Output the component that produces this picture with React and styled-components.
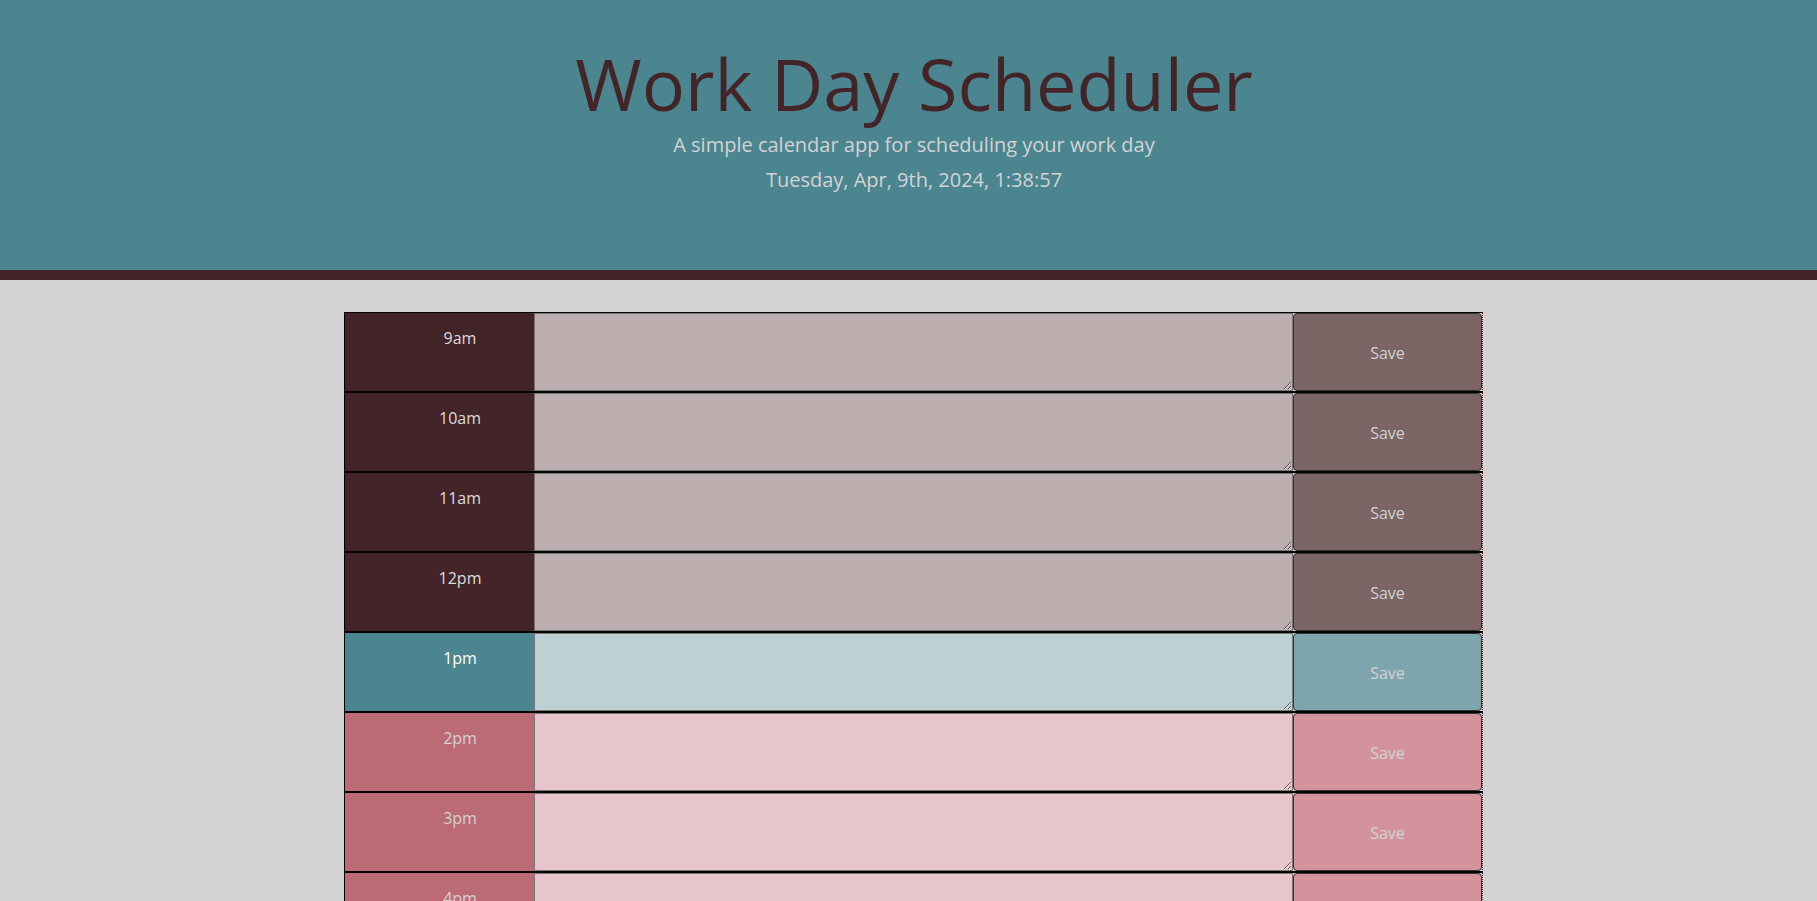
import React from "react";
import styled, { createGlobalStyle } from "styled-components";

const hours = [
  { label: "9am", time: "past" },
  { label: "10am", time: "past" },
  { label: "11am", time: "past" },
  { label: "12pm", time: "past" },
  { label: "1pm", time: "present" },
  { label: "2pm", time: "future" },
  { label: "3pm", time: "future" },
  { label: "4pm", time: "future" },
  { label: "5pm", time: "future" },
];

const palette = {
  past: { hour: "#432428", text: "#bcaeae", save: "#7a6464", label: "#dcdcdc" },
  present: { hour: "#4a8590", text: "#bdd0d4", save: "#7ea5ae", label: "#ffffff" },
  future: { hour: "#bd6a77", text: "#e7c6cb", save: "#d2939d", label: "#d3d3d3" },
};

const App = () => {
  return (
    <>
      <GlobalStyle />
      <Header>
        <Title>Work Day Scheduler</Title>
        <Lead>A simple calendar app for scheduling your work day</Lead>
        <CurrentDay>Tuesday, Apr, 9th, 2024, 1:38:57</CurrentDay>
      </Header>
      <Main>
        <Schedule>
          {hours.map((h) => (
            <TimeBlock key={h.label}>
              <Hour $time={h.time}>{h.label}</Hour>
              <Description $time={h.time} />
              <SaveBtn $time={h.time}>Save</SaveBtn>
            </TimeBlock>
          ))}
        </Schedule>
      </Main>
    </>
  );
};

export default App;

const GlobalStyle = createGlobalStyle`
  body {
    margin: 0;
    background: #d3d3d3;
    font-family: "Open Sans", "Noto Sans", sans-serif;
  }
`;

const Header = styled.header`
  box-sizing: border-box;
  height: 280px;
  padding: 40px 0 0 11px;
  background: #4a8590;
  border-bottom: 10px solid #432428;
  text-align: center;
`;

const Title = styled.h1`
  margin: 0;
  font-size: 72px;
  font-weight: 400;
  line-height: 1.2;
  color: #432428;
`;

const Lead = styled.p`
  margin: 4px 0 0;
  font-size: 20px;
  font-weight: 400;
  line-height: 30px;
  color: #d3d3d3;
`;

const CurrentDay = styled.p`
  margin: 5px 0 0;
  font-size: 20px;
  font-weight: 400;
  line-height: 30px;
  color: #d3d3d3;
`;

const Main = styled.main`
  display: flex;
  justify-content: center;
  padding: 32px 0 40px 10px;
`;

const Schedule = styled.div`
  width: 1139px;
  display: flex;
  flex-direction: column;
`;

const TimeBlock = styled.div`
  display: flex;
  height: 80px;
  box-sizing: border-box;
  border-top: 1px solid #000;
  border-bottom: 1px solid #000;
  border-left: 1px solid #000;
  border-right: 1px dotted #5a1c1c;
`;

const Hour = styled.div`
  width: 189px;
  flex-shrink: 0;
  box-sizing: border-box;
  padding: 13px 0 0 41px;
  text-align: center;
  font-size: 16px;
  line-height: 24px;
  background: ${(p) => palette[p.$time].hour};
  color: ${(p) => palette[p.$time].label};
`;

const Description = styled.textarea`
  flex: 1;
  margin: 0;
  box-sizing: border-box;
  border: 1px solid #767676;
  background: ${(p) => palette[p.$time].text};
  font-family: inherit;
  font-size: 16px;
`;

const SaveBtn = styled.button`
  width: 189px;
  flex-shrink: 0;
  margin: 0;
  padding-top: 2px;
  box-sizing: border-box;
  border: 1px solid #333;
  border-radius: 4px;
  background: ${(p) => palette[p.$time].save};
  color: #d3d3d3;
  font-family: "Open Sans", "Noto Sans", sans-serif;
  font-size: 16px;
  cursor: pointer;
`;
